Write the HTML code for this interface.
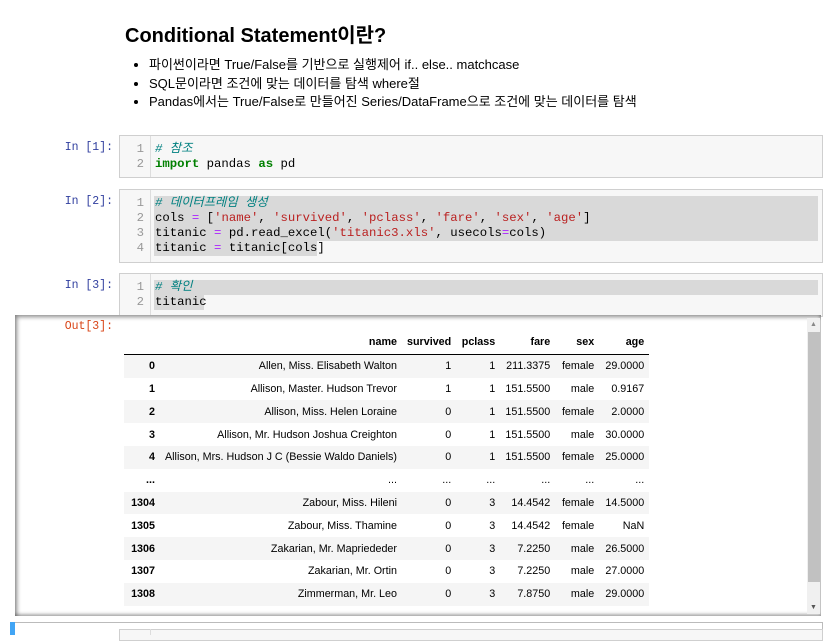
<!DOCTYPE html>
<html><head><meta charset="utf-8"><style>
body{margin:0;width:829px;height:635px;background:#fff;position:relative;overflow:hidden;font-family:"Liberation Sans","Noto Sans CJK KR",sans-serif;color:#000}
.a{position:absolute}
h2{position:absolute;left:125px;top:19px;margin:0;font-size:20px;font-weight:bold}
ul{position:absolute;left:131px;top:56px;margin:0;padding-left:18px;font-size:13px;line-height:18.5px}
.pr{position:absolute;font-family:"Liberation Mono",monospace;font-size:11.5px;color:#303f9f;width:100px;text-align:right}
.cell{position:absolute;left:119px;width:702px;border:1px solid #cfcfcf;background:#f7f7f7}
.gut{position:absolute;left:0;top:0;bottom:0;width:30px;border-right:1px solid #ddd;background:#f7f7f7}
.ln{position:absolute;left:0;width:24px;text-align:right;color:#999;font-family:"Liberation Mono",monospace;font-size:12.3px;line-height:15px}
.code{position:absolute;left:35px;font-family:"Liberation Mono","Noto Sans CJK KR",monospace;font-size:12.3px;line-height:15px;white-space:pre;color:#000}
.sel{background:#d9d9d9}
.c{color:#008080;font-style:italic}.k{color:#008000;font-weight:bold}.s{color:#ba2121}.o{color:#aa22ff}
table{position:absolute;left:124px;top:331px;border-collapse:collapse;font-size:10.75px}
td,th{text-align:right;padding:0 5px;height:22.8px;white-space:nowrap}
th{font-weight:bold}
thead th{border-bottom:1px solid #000}
tbody tr:nth-child(odd){background:#f5f5f5}
</style></head><body>
<h2>Conditional Statement이란?</h2>
<ul>
<li>파이썬이라면 True/False를 기반으로 실행제어 if.. else.. matchcase</li>
<li>SQL문이라면 조건에 맞는 데이터를 탐색 where절</li>
<li>Pandas에서는 True/False로 만들어진 Series/DataFrame으로 조건에 맞는 데이터를 탐색</li>
</ul>

<div class="pr" style="left:13px;top:141px">In [1]:</div>
<div class="cell" style="top:135px;height:41px"><div class="gut"></div>
<div class="ln" style="top:6px">1<br>2</div>
<div class="code" style="top:6px"><span class="c"># 참조</span>
<span class="k">import</span> pandas <span class="k">as</span> pd</div></div>

<div class="pr" style="left:13px;top:195px">In [2]:</div>
<div class="cell" style="top:189px;height:72px"><div class="gut"></div>
<div class="ln" style="top:6px">1<br>2<br>3<br>4</div>
<div class="a sel" style="left:34px;top:6px;width:664px;height:45px"></div>
<div class="a sel" style="left:34px;top:51px;width:163px;height:15px"></div>
<div class="code" style="top:6px"><span class="c"># 데이터프레임 생성</span>
cols <span class="o">=</span> [<span class="s">'name'</span>, <span class="s">'survived'</span>, <span class="s">'pclass'</span>, <span class="s">'fare'</span>, <span class="s">'sex'</span>, <span class="s">'age'</span>]
titanic <span class="o">=</span> pd.read_excel(<span class="s">'titanic3.xls'</span>, usecols<span class="o">=</span>cols)
titanic <span class="o">=</span> titanic[cols]</div></div>

<div class="pr" style="left:13px;top:279px">In [3]:</div>
<div class="cell" style="top:273px;height:42px"><div class="gut"></div>
<div class="ln" style="top:6px">1<br>2</div>
<div class="a sel" style="left:34px;top:6px;width:664px;height:15px"></div>
<div class="a sel" style="left:34px;top:21px;width:50px;height:15px"></div>
<div class="code" style="top:6px"><span class="c"># 확인</span>
titanic</div></div>

<div class="a" style="left:15px;top:315px;width:806px;height:301px;background:#fff;box-shadow:inset 2px 2px 4px rgba(0,0,0,.45),inset -1px -2px 3px rgba(0,0,0,.3)"></div>
<div class="pr" style="left:13px;top:320px;color:#d84315">Out[3]:</div>
<div class="a" style="left:807px;top:318px;width:13px;height:296px;background:#f0f0f0"></div>
<div class="a" style="left:808px;top:332px;width:12px;height:250px;background:#c1c1c1"></div>
<div class="a" style="left:810px;top:321px;font-size:7px;color:#888">▲</div>
<div class="a" style="left:810px;top:604px;font-size:7px;color:#555">▼</div>

<table>
<thead><tr><th style="width:26px"></th><th style="width:227px">name</th><th>survived</th><th style="width:34px">pclass</th><th style="width:45px">fare</th><th style="width:34px">sex</th><th style="width:40px">age</th></tr></thead>
<tbody>
<tr><th>0</th><td>Allen, Miss. Elisabeth Walton</td><td>1</td><td>1</td><td>211.3375</td><td>female</td><td>29.0000</td></tr>
<tr><th>1</th><td>Allison, Master. Hudson Trevor</td><td>1</td><td>1</td><td>151.5500</td><td>male</td><td>0.9167</td></tr>
<tr><th>2</th><td>Allison, Miss. Helen Loraine</td><td>0</td><td>1</td><td>151.5500</td><td>female</td><td>2.0000</td></tr>
<tr><th>3</th><td>Allison, Mr. Hudson Joshua Creighton</td><td>0</td><td>1</td><td>151.5500</td><td>male</td><td>30.0000</td></tr>
<tr><th>4</th><td>Allison, Mrs. Hudson J C (Bessie Waldo Daniels)</td><td>0</td><td>1</td><td>151.5500</td><td>female</td><td>25.0000</td></tr>
<tr style="background:#fff"><th>...</th><td>...</td><td>...</td><td>...</td><td>...</td><td>...</td><td>...</td></tr>
<tr><th>1304</th><td>Zabour, Miss. Hileni</td><td>0</td><td>3</td><td>14.4542</td><td>female</td><td>14.5000</td></tr>
<tr style="background:#fff"><th>1305</th><td>Zabour, Miss. Thamine</td><td>0</td><td>3</td><td>14.4542</td><td>female</td><td>NaN</td></tr>
<tr><th>1306</th><td>Zakarian, Mr. Mapriededer</td><td>0</td><td>3</td><td>7.2250</td><td>male</td><td>26.5000</td></tr>
<tr style="background:#fff"><th>1307</th><td>Zakarian, Mr. Ortin</td><td>0</td><td>3</td><td>7.2250</td><td>male</td><td>27.0000</td></tr>
<tr><th>1308</th><td>Zimmerman, Mr. Leo</td><td>0</td><td>3</td><td>7.8750</td><td>male</td><td>29.0000</td></tr>
</tbody></table>

<div class="a" style="left:10px;top:622px;width:5px;height:13px;background:#42a5f5"></div>
<div class="a" style="left:15px;top:622px;width:807px;height:13px;border-top:1px solid #bbb;border-right:1px solid #bbb"></div>
<div class="a" style="left:119px;top:629px;width:702px;height:10px;border:1px solid #cfcfcf;background:#f7f7f7"></div>
<div class="a" style="left:150px;top:629px;width:1px;height:6px;background:#ddd"></div>
</body></html>
